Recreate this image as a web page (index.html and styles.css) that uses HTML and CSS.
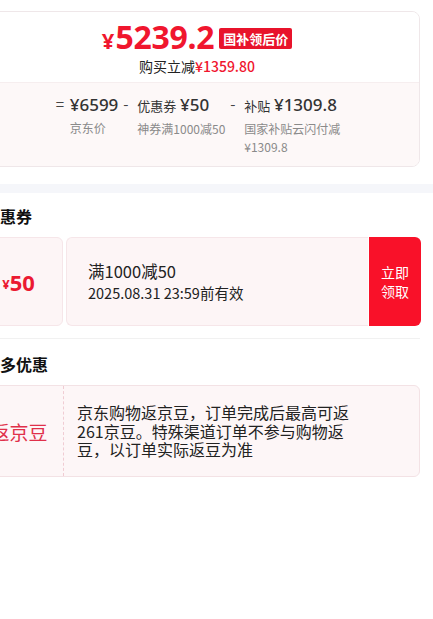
FILE: index.html
```html
<!DOCTYPE html>
<html lang="zh-CN">
<head>
<meta charset="utf-8">
<title>优惠明细</title>
<link rel="stylesheet" href="styles.css">
</head>
<body>
<div class="page">
  <div class="price-card">
    <div class="price-top">
      <div class="price-line">
        <span class="yen">¥</span><span class="num">5239.2</span><span class="badge">国补领后价</span>
      </div>
      <div class="save-line">购买立减<span class="save-amt">¥1359.80</span></div>
    </div>
    <div class="price-bottom">
      <div class="breakdown">
        <div class="item">
          <span class="op">=</span>
          <div class="col">
            <div class="main"><span class="big">¥6599</span></div>
            <div class="sub">京东价</div>
          </div>
        </div>
        <div class="item">
          <span class="op">-</span>
          <div class="col">
            <div class="main"><span class="lbl">优惠券</span> <span class="big">¥50</span></div>
            <div class="sub">神券满1000减50</div>
          </div>
        </div>
        <div class="item">
          <span class="op">-</span>
          <div class="col wide">
            <div class="main"><span class="lbl">补贴</span> <span class="big">¥1309.8</span></div>
            <div class="sub">国家补贴云闪付减¥1309.8</div>
          </div>
        </div>
      </div>
    </div>
  </div>

  <div class="band"></div>

  <div class="section">
    <div class="sec-title">优惠券</div>
    <div class="coupon">
      <div class="coupon-amt"><span class="c-yen">¥</span><span class="c-num">50</span></div>
      <div class="coupon-info">
        <div class="c-cond">满1000减50</div>
        <div class="c-date">2025.08.31 23:59前有效</div>
      </div>
      <div class="coupon-btn">立即<br>领取</div>
    </div>
  </div>

  <div class="divider"></div>

  <div class="section">
    <div class="sec-title more">更多优惠</div>
    <div class="bean">
      <div class="bean-left">返京豆</div>
      <div class="bean-text">京东购物返京豆，订单完成后最高可返261京豆。特殊渠道订单不参与购物返豆，以订单实际返豆为准</div>
    </div>
  </div>
</div>
</body>
</html>
```

FILE: styles.css
```css
html, body {
  margin: 0;
  padding: 0;
  background: #ffffff;
}

body {
  font-family: "Noto Sans CJK SC", "Noto Sans", sans-serif;
  color: #222222;
  overflow: hidden;
}

.page {
  margin-left: -26px;
  width: 459px;
  padding-top: 11px;
}

/* ---------- price card ---------- */
.price-card {
  margin-right: 13px;
  border: 1px solid #efe7e9;
  border-radius: 8px;
  overflow: hidden;
}

.price-top {
  background: #ffffff;
  padding: 6px 0 6px;
  display: flex;
  flex-direction: column;
  align-items: center;
}

.price-line {
  height: 38px;
  display: flex;
  align-items: center;
  color: #f0162e;
  line-height: 1;
}

.yen {
  font-family: "Noto Sans", sans-serif;
  font-weight: 700;
  font-size: 22px;
  line-height: 1;
  margin-top: 6px;
  margin-right: 1px;
}

.num {
  font-family: "Noto Sans", sans-serif;
  font-weight: 700;
  font-size: 32px;
  line-height: 1;
  letter-spacing: -0.3px;
}

.badge {
  margin-left: 5px;
  margin-top: 2px;
  background: #e8132b;
  color: #ffffff;
  font-weight: 700;
  font-size: 13px;
  line-height: 21px;
  padding: 0 4px;
  border-radius: 2px;
}

.save-line {
  margin-top: 1px;
  font-size: 14px;
  line-height: 19px;
  color: #222222;
}

.save-amt {
  color: #f0162e;
  font-weight: 500;
}

.price-bottom {
  background: #fdf8f8;
  border-top: 1px solid #f6eeef;
  padding: 10px 0 10px;
}

.breakdown {
  display: flex;
  justify-content: center;
  gap: 5px;
  padding-left: 4px;
}

.item {
  display: flex;
  align-items: flex-start;
}

.op {
  font-size: 15px;
  line-height: 22px;
  color: #444444;
  width: 9px;
  margin-right: 5px;
}

.col {
  display: flex;
  flex-direction: column;
}

.col.wide {
  width: 98px;
}

.main {
  line-height: 22px;
  color: #333333;
  white-space: nowrap;
}

.big {
  font-family: "Noto Sans", sans-serif;
  font-size: 17px;
  font-weight: 500;
}

.lbl {
  font-size: 13px;
}

.sub {
  margin-top: 3px;
  font-size: 12px;
  line-height: 18px;
  color: #8a8a8a;
}

/* ---------- band ---------- */
.band {
  margin-top: 17px;
  height: 9px;
  background: #f5f6fa;
}

/* ---------- sections ---------- */
.section {
  margin-right: 13px;
}

.sec-title {
  padding-left: 10px;
  font-size: 16px;
  font-weight: 700;
  line-height: 22px;
  margin-top: 12px;
  color: #111111;
}

.sec-title.more {
  margin-top: 14px;
}

/* ---------- coupon ---------- */
.coupon {
  margin-top: 10px;
  height: 89px;
  display: flex;
  gap: 3px;
}

.coupon-amt {
  width: 87px;
  background: #fdf5f6;
  border: 1px solid #f6e6e9;
  border-radius: 6px;
  display: flex;
  align-items: center;
  justify-content: center;
  color: #eb1a32;
}

.c-yen {
  font-family: "Noto Sans", sans-serif;
  font-weight: 700;
  font-size: 13px;
  margin-top: 4px;
}

.c-num {
  font-family: "Noto Sans", sans-serif;
  font-weight: 700;
  font-size: 22px;
}

.coupon-info {
  flex: 1;
  background: #fdf5f6;
  border: 1px solid #f6e6e9;
  border-right: none;
  border-radius: 6px 0 0 6px;
  display: flex;
  flex-direction: column;
  justify-content: center;
  padding-left: 21px;
}

.c-cond {
  font-size: 16.5px;
  line-height: 22px;
  color: #222222;
}

.c-date {
  font-size: 14.5px;
  line-height: 22px;
  color: #222222;
}

.coupon-btn {
  width: 52px;
  margin-left: -2px;
  margin-right: -1px;
  background: #f91129;
  color: #ffffff;
  border-radius: 0 6px 6px 0;
  display: flex;
  align-items: center;
  justify-content: center;
  text-align: center;
  font-size: 14px;
  line-height: 19px;
}

/* ---------- divider ---------- */
.divider {
  margin-top: 12px;
  margin-right: 13px;
  height: 1px;
  background: #f1f1f1;
}

/* ---------- bean ---------- */
.bean {
  margin-top: 10px;
  height: 90px;
  border: 1px solid #f3e2e5;
  border-radius: 6px;
  background: #fdf6f7;
  display: flex;
}

.bean-left {
  width: 88px;
  border-right: 1px dashed #f0ccd3;
  display: flex;
  align-items: center;
  justify-content: center;
  font-size: 19px;
  color: #e0304a;
}

.bean-text {
  width: 280px;
  padding-left: 13px;
  display: flex;
  align-items: center;
  font-size: 16px;
  line-height: 18.5px;
  color: #222222;
}
```
